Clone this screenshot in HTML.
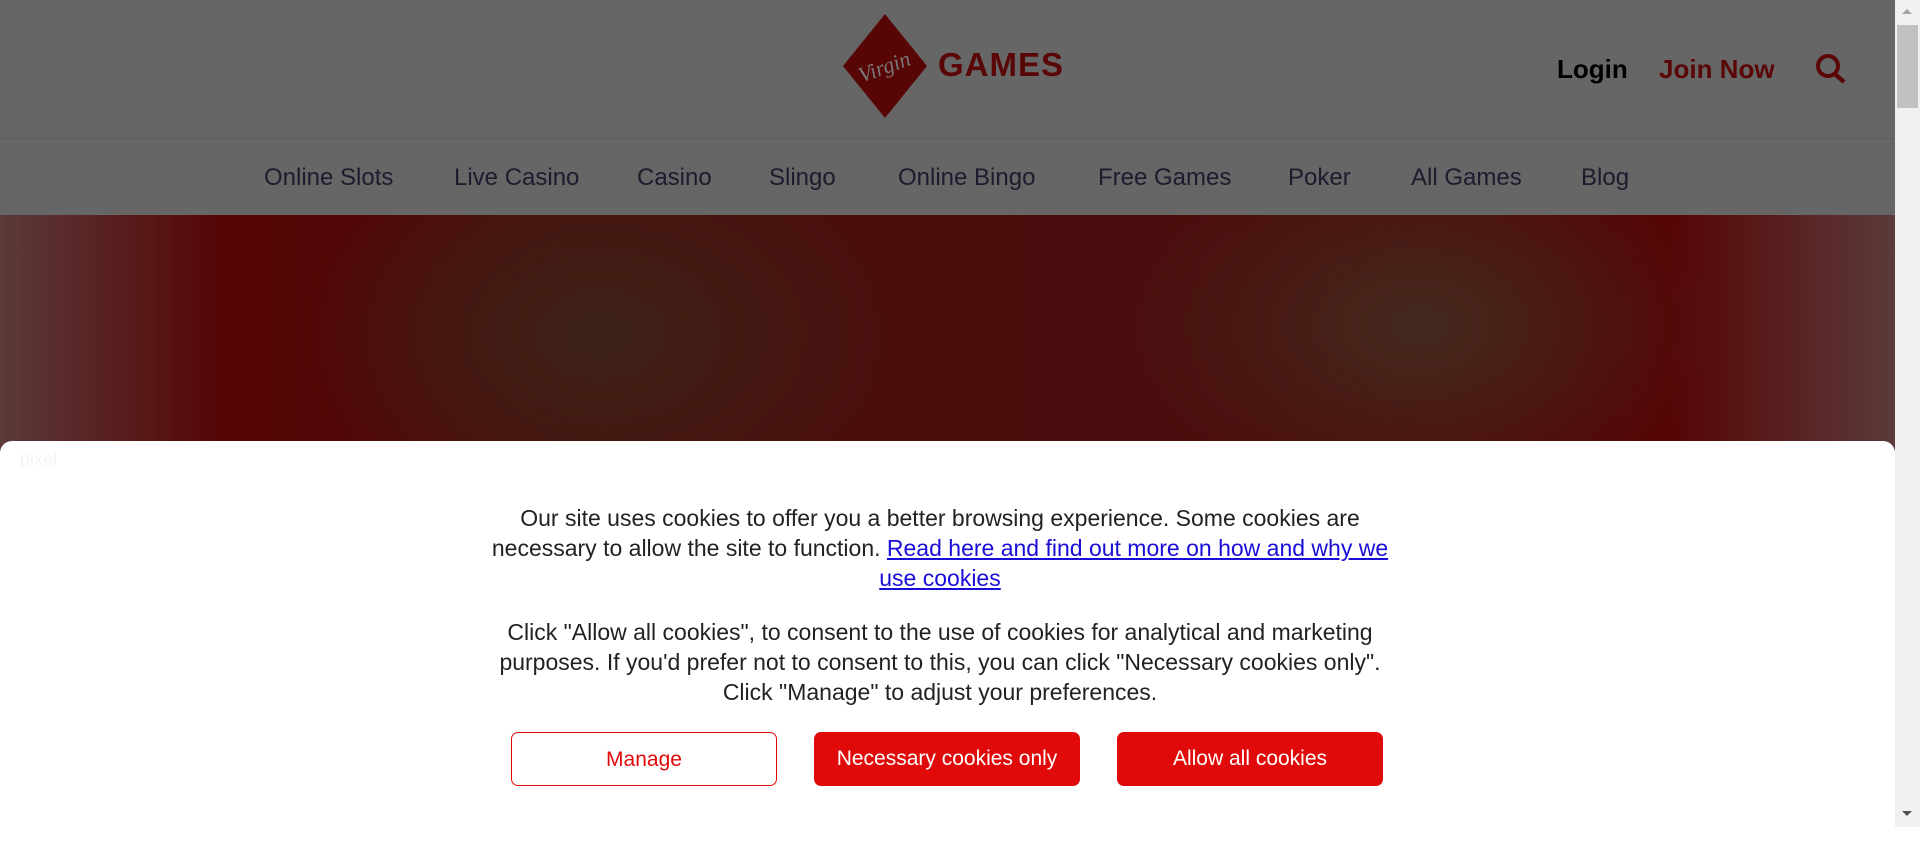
<!DOCTYPE html>
<html><head><meta charset="utf-8"><style>
html,body{margin:0;padding:0;width:1920px;height:827px;overflow:hidden;font-family:"Liberation Sans",sans-serif;}
.page{position:absolute;left:0;top:0;width:1895px;height:827px;background:#666;}
.hdr{position:absolute;left:0;top:0;width:1895px;height:138px;border-bottom:1px solid #5d5d5d;}
.nav{position:absolute;left:0;top:139px;width:1895px;height:76px;}
.nav span{position:absolute;top:25px;font-size:24px;color:#1c1c2e;}
.hero{position:absolute;left:0;top:215px;width:1895px;height:240px;
background:radial-gradient(ellipse 300px 200px at 600px 120px,#3d2318,transparent),radial-gradient(ellipse 300px 200px at 1420px 110px,#432a1e,transparent),linear-gradient(90deg,#5b3a3a 0%,#560404 12%,#4a0f0c 30%,#4a0d0d 60%,#560404 88%,#5b3a3a 100%);}
.modal{position:absolute;left:0;top:441px;width:1895px;height:400px;background:#fff;border-radius:12px 12px 0 0;}
.txt{position:absolute;left:484px;width:912px;text-align:center;font-size:23px;line-height:30px;color:#222;}
.txt a{color:#1a0dd8;text-decoration:underline;}
.btn{position:absolute;top:291px;height:54px;width:266px;border-radius:7px;font-size:21px;line-height:54px;text-align:center;box-sizing:border-box;}
.sb{position:absolute;left:1895px;top:0;width:25px;height:827px;background:#f1f1f1;}
</style></head><body>
<div class="page">
<div class="hdr">
<svg style="position:absolute;left:843px;top:14px" width="84" height="104" viewBox="0 0 84 104"><polygon points="42,0 84,52 42,104 0,52" fill="#570505"/><text x="42" y="60" font-family="Liberation Serif" font-style="italic" font-size="22" fill="#777" text-anchor="middle" transform="rotate(-20 42 55)">Virgin</text></svg>
<div style="position:absolute;left:938px;top:46px;font-size:33px;font-weight:bold;color:#5a0606;letter-spacing:1px">GAMES</div>
<div style="position:absolute;left:1557px;top:54px;font-size:26px;font-weight:bold;color:#000">Login</div>
<div style="position:absolute;left:1659px;top:54px;font-size:26px;font-weight:bold;color:#5a0606">Join Now</div>
<svg style="position:absolute;left:1815px;top:53px" width="34" height="32" viewBox="0 0 34 32"><circle cx="13" cy="13" r="10" stroke="#5a0606" stroke-width="4" fill="none"/><line x1="20" y1="21" x2="29" y2="29" stroke="#5a0606" stroke-width="4.5"/></svg>
</div>
<div class="nav">
<span style="left:264px">Online Slots</span><span style="left:454px">Live Casino</span><span style="left:637px">Casino</span><span style="left:769px">Slingo</span><span style="left:898px">Online Bingo</span><span style="left:1098px">Free Games</span><span style="left:1288px">Poker</span><span style="left:1411px">All Games</span><span style="left:1581px">Blog</span>
</div>
<div class="hero"></div>
<div class="modal">
<div style="position:absolute;left:20px;top:8px;font-size:18px;color:#f4f4f4">pixel</div>
<div class="txt" style="top:62px">Our site uses cookies to offer you a better browsing experience. Some cookies are necessary to allow the site to function. <a>Read here and find out more on how and why we use cookies</a></div>
<div class="txt" style="top:176px">Click "Allow all cookies", to consent to the use of cookies for analytical and marketing purposes. If you'd prefer not to consent to this, you can click "Necessary cookies only". Click "Manage" to adjust your preferences.</div>
<div class="btn" style="left:511px;border:1px solid #e10a0a;color:#e10a0a;background:#fff">Manage</div>
<div class="btn" style="left:814px;background:#e10a0a;color:#fff">Necessary cookies only</div>
<div class="btn" style="left:1117px;background:#e10a0a;color:#fff">Allow all cookies</div>
</div>
</div>
<div class="sb"><div style="position:absolute;left:2px;top:25px;width:21px;height:83px;background:#c1c1c1"></div>
<div style="position:absolute;left:7px;top:9px;border:5px solid transparent;border-bottom-color:#a3a3a3;border-top:0"></div>
<div style="position:absolute;left:7px;top:811px;border:5px solid transparent;border-top-color:#505050;border-bottom:0"></div></div>
</body></html>
